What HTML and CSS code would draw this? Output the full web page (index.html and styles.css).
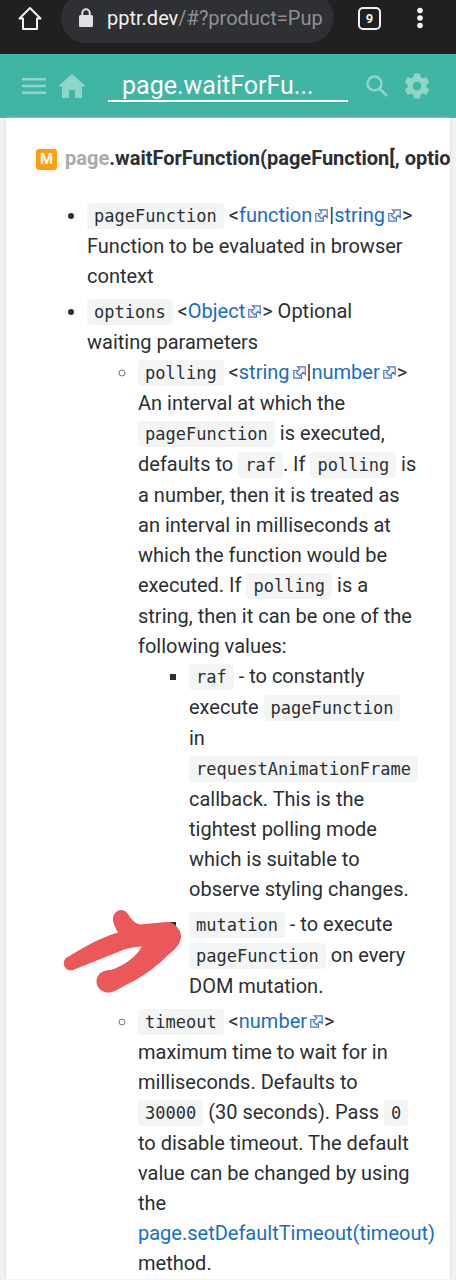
FILE: index.html
```html
<!DOCTYPE html>
<html lang="en">
<head>
    <meta charset="UTF-8">
    <meta name="viewport" content="width=device-width, initial-scale=1.0">
    <link rel="stylesheet" href="styles.css">
    <title>page.waitForFunction</title>
</head>
<body>
    <svg class="sprite" aria-hidden="true">
        <symbol id="external" viewBox="0 0 13 13">
            <path d="M4.500 4.500H.8v7.700h7.700V9" fill="#f4f7fd" stroke="#5277c0" stroke-width="1.200"/>
            <path d="M4.500 .8h7.700v7.700l-2.200-2.200-3.400 3.500-3.300-3.300 3.500-3.400z" fill="#f4f7fd" stroke="#5277c0" stroke-width="1.200"/>
        </symbol>
    </svg>

    <div class="browser">
        <button class="icon" aria-label="Home">
            <svg width="24" height="24" viewBox="0 0 24 24" fill="none" stroke="#f1f1f1" stroke-width="2" stroke-linejoin="round"><path d="M1.500 12.500L12 2l10.500 10.500H19V23H5V12.500z"/></svg>
        </button>
        <div class="url">
            <svg width="14" height="20" viewBox="0 0 14 20"><path d="M3.300 8V5a3.700 3.700 0 0 1 7.400 0v3" fill="none" stroke="#dfe1e5" stroke-width="2"/><rect y="7" width="14" height="12" rx="1.500" fill="#dfe1e5"/></svg>
            <span class="address"><span class="host">pptr.dev</span>/#?product=Pup</span>
        </div>
        <button class="tabs" aria-label="Tabs">9</button>
        <button class="icon" aria-label="Menu">
            <svg width="6" height="22" viewBox="0 0 6 22" fill="#f1f1f1"><circle cx="3" cy="3.500" r="2.800"/><circle cx="3" cy="11" r="2.800"/><circle cx="3" cy="18.500" r="2.800"/></svg>
        </button>
    </div>

    <header class="toolbar">
        <button class="icon" aria-label="Contents">
            <svg width="24" height="16" viewBox="0 0 24 16" fill="#8fd6c9"><path d="M0 0h24v2.500H0zM0 6.800h24v2.500H0zM0 13.500h24V16H0z"/></svg>
        </button>
        <button class="icon home" aria-label="Start page">
            <svg width="28" height="24" viewBox="0 0 28 24" fill="#8fd6c9"><path d="M14 0l14 12.500h-4V24h-7v-8h-6v8H4V12.500H0z"/></svg>
        </button>
        <input class="search" type="text" aria-label="Search" value="page.waitForFu...">
        <button class="icon" aria-label="Find">
            <svg width="22" height="22" viewBox="0 0 22 22" fill="none" stroke="#8fd6c9" stroke-width="2.500"><circle cx="8.500" cy="8.500" r="7"/><path d="M13.500 13.500l7.500 7.500"/></svg>
        </button>
        <button class="icon" aria-label="Settings">
            <svg width="30" height="30" viewBox="0 0 24 24" fill="#8fd6c9"><path d="M19.430 12.980c.04-.32.07-.64.07-.98s-.03-.66-.07-.98l2.110-1.650c.19-.15.24-.42.12-.64l-2-3.460c-.12-.22-.39-.3-.61-.22l-2.490 1c-.52-.4-1.080-.73-1.690-.98l-.38-2.650C14.460 2.180 14.250 2 14 2h-4c-.25 0-.46.18-.49.42l-.38 2.650c-.61.25-1.170.59-1.690.98l-2.490-1c-.23-.09-.49 0-.61.22l-2 3.460c-.13.22-.07.49.12.64l2.110 1.650c-.04.32-.07.65-.07.98s.03.66.07.98l-2.110 1.650c-.19.15-.24.42-.12.64l2 3.460c.12.22.39.3.61.22l2.490-1c.52.4 1.080.73 1.690.98l.38 2.650c.03.24.24.42.49.42h4c.25 0 .46-.18.49-.42l.38-2.650c.61-.25 1.170-.59 1.690-.98l2.490 1c.23.09.49 0 .61-.22l2-3.460c.12-.22.07-.49-.12-.64l-2.110-1.650zM12 15.500c-1.930 0-3.500-1.570-3.500-3.500s1.570-3.500 3.500-3.500 3.500 1.570 3.500 3.500-1.570 3.500-3.500 3.500z"/></svg>
        </button>
    </header>

    <main class="content">
        <h1><span class="badge">M</span><span class="muted">page</span>.waitForFunction(pageFunction[, options[, ...args]])</h1>
        <ul>
            <li><code>pageFunction</code> &lt;<a href="#function">function<svg class="ext"><use href="#external"/></svg></a>|<a href="#string">string<svg class="ext"><use href="#external"/></svg></a>&gt; Function to be evaluated in browser context</li>
            <li><code>options</code> &lt;<a href="#object">Object<svg class="ext"><use href="#external"/></svg></a>&gt; Optional waiting parameters
                <ul>
                    <li><code>polling</code> &lt;<a href="#string">string<svg class="ext"><use href="#external"/></svg></a>|<a href="#number">number<svg class="ext"><use href="#external"/></svg></a>&gt; An interval at which the <code>pageFunction</code> is executed, defaults to <code>raf</code>. If <code>polling</code> is a number, then it is treated as an interval in milliseconds at which the function would be executed. If <code>polling</code> is a string, then it can be one of the following values:
                        <ul>
                            <li><code>raf</code> - to constantly execute <code>pageFunction</code> in <code>requestAnimationFrame</code> callback. This is the tightest polling mode which is suitable to observe styling changes.</li>
                            <li class="marked"><code>mutation</code> - to execute <code>pageFunction</code> on every DOM mutation.
                                <svg class="arrow" width="119" height="84" viewBox="0 0 119 84" fill="#ec575a"><path d="M3 49C20 39 36 29 55 23.500C52 18 48 12 51 5.500C54 0 61-1 65 5C68 10 71 14 77 15.500L103 13C111 12 119 21 118 29C116 39 109 42 103 48C91 60 76 70 60 77.500C54 81 49 84 44 83.500C36 82 32 76 34 69C36 63 42 61 48 61C62 56 73 48 79 37.500C71 38 63 39 55 43C40 49 25 55 10 61C2 63-2 54 3 49z"/></svg>
                            </li>
                        </ul>
                    </li>
                    <li><code>timeout</code> &lt;<a href="#number">number<svg class="ext"><use href="#external"/></svg></a>&gt; maximum time to wait for in milliseconds. Defaults to <code>30000</code> (30 seconds). Pass <code>0</code> to disable timeout. The default value can be changed by using the <a href="#timeout">page.setDefaultTimeout(timeout)</a> method.</li>
                </ul>
            </li>
        </ul>
    </main>
</body>
</html>
```
FILE: styles.css
```css
* {
    box-sizing: border-box;
}

body {
    margin: 0;
    background-color: #f1f2f3;
    color: #2b2f33;
    font-family: Roboto, "Liberation Sans", sans-serif;
    font-size: 20px;
    line-height: 30px;
}

button {
    padding: 0;
    border: none;
    background: none;
    font-family: inherit;
    cursor: pointer;
}

.sprite {
    display: none;
}

.icon {
    display: flex;
}

/* browser bar */
.browser {
    display: flex;
    align-items: center;
    height: 54px;
    padding: 0 33px 18px 18px;
    background-color: #202020;
    overflow: hidden;
}

.url {
    flex: 1;
    display: flex;
    align-items: center;
    gap: 14px;
    height: 50px;
    margin: 0 24px 0 19px;
    padding: 0 10px 0 18px;
    border-radius: 25px;
    background-color: #2f3033;
    color: #8f9194;
    white-space: nowrap;
}

.host {
    color: #f1f1f1;
}

.tabs {
    width: 23px;
    height: 23px;
    margin-right: 36px;
    border: 2px solid #f1f1f1;
    border-radius: 5px;
    color: #f1f1f1;
    font-size: 13px;
    font-weight: bold;
    line-height: 19px;
}

/* green toolbar */
.toolbar {
    display: flex;
    align-items: center;
    height: 64px;
    padding: 0 24px 0 22px;
    background-color: #40b5a4;
}

.home {
    margin: 0 22px 0 12px;
}

.search {
    flex: 1;
    min-width: 0;
    height: 32px;
    margin-right: 18px;
    padding: 0 14px;
    border: none;
    border-bottom: 2px solid #fff;
    background: none;
    color: #fff;
    font-family: inherit;
    font-size: 25px;
}

.toolbar .icon:last-child {
    margin-left: 14px;
}

/* api text */
.content {
    margin: 0 6px;
    padding: 25px 32px 1px 30px;
    background-color: #fff;
    box-shadow: 0 0 3px #ccc;
    overflow: hidden;
}

h1 {
    margin: 0 0 27px;
    font-size: 20px;
    white-space: nowrap;
}

.badge {
    display: inline-block;
    width: 21px;
    height: 21px;
    margin-right: 8px;
    border-radius: 3px;
    background-color: #ff9d0b;
    color: #fff;
    font-size: 15px;
    line-height: 21px;
    text-align: center;
    vertical-align: 1px;
}

.muted {
    color: #aaa;
}

ul {
    margin: 0;
    padding-left: 51px;
}

li + li {
    margin-top: 5px;
}

ul ul > li::marker {
    color: #777;
}

ul ul ul > li::marker {
    color: #2b2f33;
}

code {
    padding: 3px 7px;
    border-radius: 4px;
    background-color: #f3f5f5;
    font-family: "DejaVu Sans Mono", monospace;
    font-size: 17px;
}

a {
    color: #1a6dc4;
    text-decoration: none;
}

.ext {
    width: 13px;
    height: 13px;
    margin: 0 1px 0 3px;
}

.marked {
    position: relative;
}

.arrow {
    position: absolute;
    top: 0;
    left: -126px;
}
```
